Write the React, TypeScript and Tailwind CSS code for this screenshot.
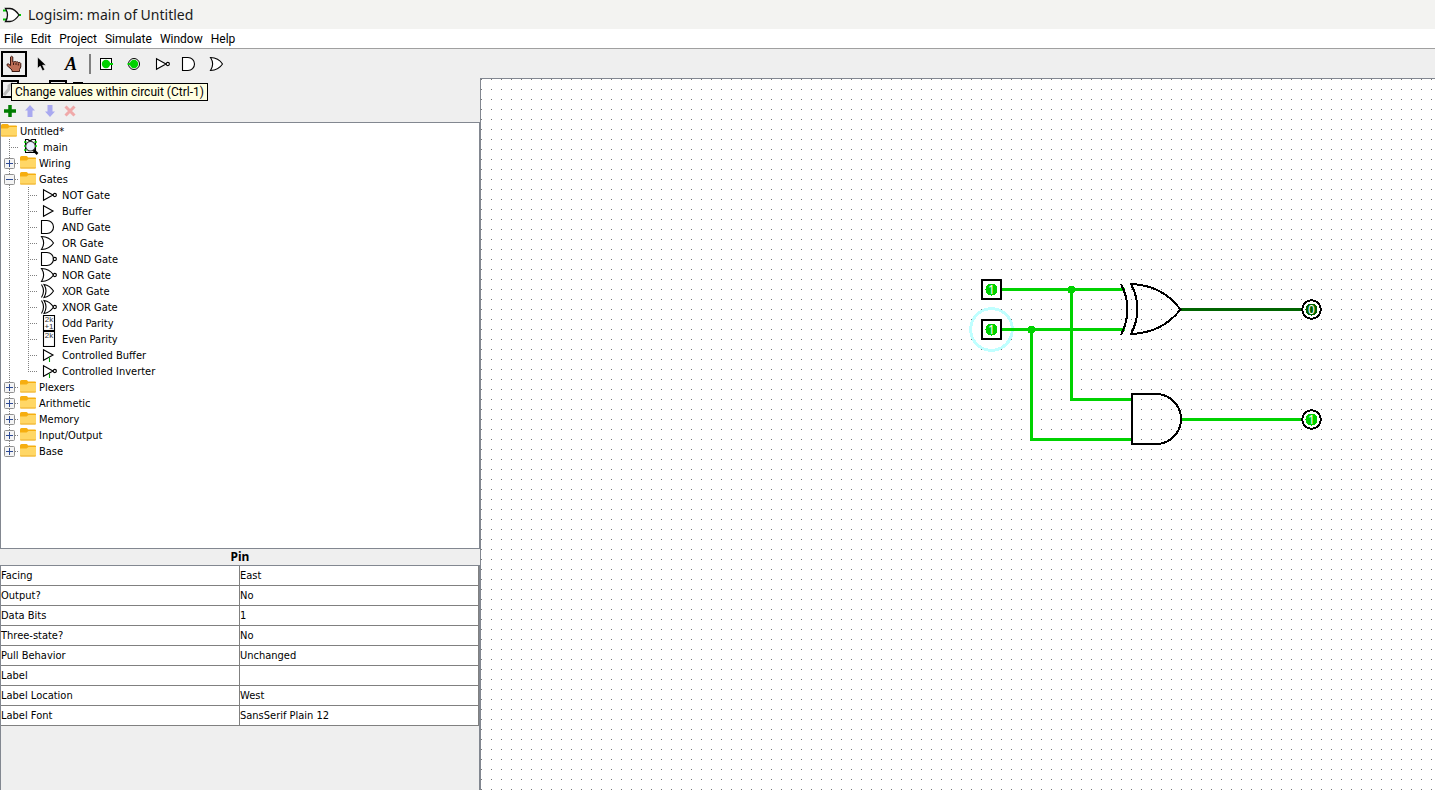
import { useState } from 'react';
import type { ReactNode } from 'react';

type IconName =
  | 'not' | 'buffer' | 'and' | 'or' | 'nand' | 'nor' | 'xor' | 'xnor'
  | 'odd' | 'even' | 'cbuffer' | 'cinverter' | 'circuit' | 'folder';

const OR_BODY = 'M2.5 1.5 Q10.500 1.800 14.5 8 Q10.500 14.200 2.5 14.5 Q6.800 8 2.5 1.5 Z';
const XOR_BODY = 'M5 1.5 Q11 2.500 14.5 8 Q11 13.500 5 14.5 Q9 8 5 1.5 Z';

function Glyph({ name }: { name: IconName }) {
  if (name === 'folder') {
    return (
      <svg width="16" height="16" viewBox="0 0 16 16" className="shrink-0" aria-hidden="true">
        <path d="M0 2.5 Q0 1 1.5 1 H6.5 Q7.5 1 8 2.5 H15 Q16 2.5 16 3.5 V8 H0 Z" fill="#f6ae10" />
        <path d="M0 5.500 H6.500 L8.500 4 H16 V12.5 Q16 13.5 15 13.5 H1 Q0 13.5 0 12.5 Z" fill="#ffd766" />
        <path d="M0 12.5 H16 Q16 13.5 15 13.5 H1 Q0 13.5 0 12.5 Z" fill="#eeb02c" />
      </svg>
    );
  }
  return (
    <svg width="20" height="16" viewBox="0 0 20 16" className="shrink-0" fill="none" stroke="#000" strokeWidth="1.1" aria-hidden="true">
      {(name === 'not' || name === 'cinverter') && (
        <>
          <path d="M4.5 2.8 L14 8 L4.5 13.200 Z" fill="#fff" />
          <circle cx="15.8" cy="8" r="1.6" fill="#fff" />
        </>
      )}
      {(name === 'buffer' || name === 'cbuffer') && <path d="M4.5 2.8 L14 8 L4.5 13.200 Z" fill="#fff" />}
      {(name === 'cbuffer' || name === 'cinverter') && <path d="M10.5 10.500 V15" stroke="#00a000" />}
      {(name === 'and' || name === 'nand') && (
        <path d="M2.5 1.5 H8 A6.5 6.5 0 0 1 8 14.5 H2.5 Z" fill="#fff" />
      )}
      {(name === 'or' || name === 'nor') && <path d={OR_BODY} fill="#fff" />}
      {(name === 'xor' || name === 'xnor') && (
        <>
          <path d={XOR_BODY} fill="#fff" />
          <path d="M2.5 1.5 Q6.500 8 2.5 14.5" />
        </>
      )}
      {(name === 'nand' || name === 'nor' || name === 'xnor') && <circle cx="15.8" cy="8" r="1.6" fill="#fff" />}
      {(name === 'odd' || name === 'even') && (
        <>
          <rect x="4.5" y="0.5" width="11" height="15" fill="#fff" />
          <text x="10" y="7" fontSize="8" textAnchor="middle" fill="#333" stroke="none" fontFamily="Liberation Sans, sans-serif">2k</text>
          {name === 'odd' && (
            <text x="10" y="14" fontSize="8" textAnchor="middle" fill="#333" stroke="none" fontFamily="Liberation Sans, sans-serif">+1</text>
          )}
        </>
      )}
      {name === 'circuit' && (
        <>
          <path d="M5.5 0.5 H8 Q10 2.5 12 0.5 H15.5 V13.5 H5.5 Z" fill="#fff" />
          <circle cx="10.5" cy="7.2" r="4.800" fill="#eceeff" stroke="#333" />
          <path d="M13.5 11 L17.5 15" strokeWidth="2.5" />
          <path d="M4 3 H6.500 M4 7 H6 M4 11 H6.500 M14.500 3 H17 M15 7 H17" stroke="#00d200" strokeWidth="1.500" />
        </>
      )}
    </svg>
  );
}

function Hand() {
  return (
    <svg width="16" height="18" viewBox="0 0 16 18" aria-hidden="true">
      <path
        d="M4.5 2 Q5.5 0.500 6.8 2 V7 H8 Q9.200 5.8 10.200 7 Q11.400 6.2 12.200 7.5 Q14 6.8 14.8 8.5 V12 L13.5 14.500 V16.5 H6 V15 L1 10.5 Q0.5 8.800 2.200 8.800 L4.5 10.5 Z"
        fill="#bd6f57" stroke="#3a1710"
      />
      <path d="M7.500 8 V10 M10 8 V10 M12.300 8.5 V10.5" stroke="#3a1710" />
    </svg>
  );
}

function Arrow() {
  return (
    <svg width="14" height="16" viewBox="0 0 14 16" aria-hidden="true">
      <path d="M2.5 1 V12.5 L5.2 10 L7.5 14.8 L9.8 13.8 L7.6 9.2 H11.2 Z" fill="#000" stroke="#fff" strokeWidth="0.6" />
    </svg>
  );
}

function PinIcon({ round = false }: { round?: boolean }) {
  return (
    <svg width="20" height="16" viewBox="0 0 20 16" aria-hidden="true">
      {round ? (
        <circle cx="10" cy="8" r="5.5" fill="#fff" stroke="#000" />
      ) : (
        <rect x="4.5" y="2.5" width="11" height="11" fill="#fff" stroke="#000" />
      )}
      <circle cx="10" cy="8" r="4.2" fill="#00d200" />
      <path d={round ? 'M3.500 8 H8' : 'M12 8 H17'} stroke="#00d200" strokeWidth="2" />
    </svg>
  );
}

const GATES: [IconName, string][] = [
  ['not', 'NOT Gate'],
  ['buffer', 'Buffer'],
  ['and', 'AND Gate'],
  ['or', 'OR Gate'],
  ['nand', 'NAND Gate'],
  ['nor', 'NOR Gate'],
  ['xor', 'XOR Gate'],
  ['xnor', 'XNOR Gate'],
  ['odd', 'Odd Parity'],
  ['even', 'Even Parity'],
  ['cbuffer', 'Controlled Buffer'],
  ['cinverter', 'Controlled Inverter'],
];

const LIBRARIES = ['Wiring', 'Gates', 'Plexers', 'Arithmetic', 'Memory', 'Input/Output', 'Base'];

/* One 19px indent step with its dotted connector lines. */
function Gutter({ branch = false, last = false }: { branch?: boolean; last?: boolean }) {
  return (
    <svg width="19" height="16" viewBox="0 0 19 16" className="shrink-0" stroke="#808080" strokeDasharray="1 1" aria-hidden="true">
      <path d={last ? 'M8.5 0 V8' : 'M8.5 0 V16'} />
      {branch && <path d="M8 8.5 H18" />}
    </svg>
  );
}

function Expander({ open, last, label, onClick }: { open: boolean; last: boolean; label: string; onClick: () => void }) {
  return (
    <button type="button" aria-label={label} aria-expanded={open} onClick={onClick} className="h-4 w-[19px] shrink-0">
      <svg width="19" height="16" viewBox="0 0 19 16" aria-hidden="true">
        <path d={last ? 'M8.5 0 V8' : 'M8.5 0 V16'} stroke="#808080" strokeDasharray="1 1" />
        <path d="M14 8.5 H18" stroke="#808080" strokeDasharray="1 1" />
        <rect x="3.5" y="3.5" width="10" height="10" rx="1" fill="#f4f4f4" stroke="#919191" />
        <path d={open ? 'M5 8.5 H12' : 'M5 8.5 H12 M8.5 5 V12'} stroke="#2d4a94" />
      </svg>
    </button>
  );
}

function Explorer() {
  const [open, setOpen] = useState<string[]>(['Gates']);
  const toggle = (name: string) =>
    setOpen((cur) => (cur.includes(name) ? cur.filter((n) => n !== name) : [...cur, name]));
  const row = 'flex h-4 items-center';
  const label = 'ml-[3px] pt-[2px] whitespace-nowrap';

  return (
    <div className="min-h-0 flex-[426] overflow-hidden border border-[#828790] bg-white">
      <div className={row}>
        <Glyph name="folder" />
        <span className={label}>Untitled*</span>
      </div>
      <ul>
        <li className={row}>
          <Gutter branch />
          <Glyph name="circuit" />
          <span className={label}>main</span>
        </li>
        {LIBRARIES.map((name, i) => {
          const isOpen = open.includes(name);
          const last = i === LIBRARIES.length - 1;
          return (
            <li key={name}>
              <div className={row}>
                <Expander open={isOpen} last={last} label={name} onClick={() => toggle(name)} />
                <Glyph name="folder" />
                <span className={label}>{name}</span>
              </div>
              {isOpen && name === 'Gates' && (
                <ul>
                  {GATES.map(([icon, text], g) => (
                    <li key={text} className={row}>
                      <Gutter />
                      <Gutter branch last={g === GATES.length - 1} />
                      <Glyph name={icon} />
                      <span className={label}>{text}</span>
                    </li>
                  ))}
                </ul>
              )}
            </li>
          );
        })}
      </ul>
    </div>
  );
}

const ATTRIBUTES: [string, string][] = [
  ['Facing', 'East'],
  ['Output?', 'No'],
  ['Data Bits', '1'],
  ['Three-state?', 'No'],
  ['Pull Behavior', 'Unchanged'],
  ['Label', ''],
  ['Label Location', 'West'],
  ['Label Font', 'SansSerif Plain 12'],
];

function Attributes() {
  return (
    <section className="flex min-h-0 flex-[242] flex-col">
      <h2 className="h-4 text-center font-['Noto_Sans'] text-xs leading-4 font-bold">Pin</h2>
      <div className="flex-1 border border-b-0 border-[#828790]">
        <table className="w-full table-fixed border-separate border-spacing-0 bg-white">
          <tbody>
            {ATTRIBUTES.map(([name, value]) => (
              <tr key={name} className="h-5">
                <th scope="row" className="border-r border-b border-[#808080] p-0 pt-px text-left font-normal">{name}</th>
                <td className="border-r border-b border-[#808080] p-0 pt-px">{value}</td>
              </tr>
            ))}
          </tbody>
        </table>
      </div>
    </section>
  );
}

function ToolButton({ label, selected = false, children }: { label: string; selected?: boolean; children: ReactNode }) {
  return (
    <button
      type="button"
      aria-label={label}
      className={`flex size-[26px] items-center justify-center ${selected ? 'border-2 border-black' : ''}`}
    >
      {children}
    </button>
  );
}

function Toolbar() {
  return (
    <div className="relative flex h-[29px] items-center gap-[2px] pl-px">
      <ToolButton label="Poke tool" selected><Hand /></ToolButton>
      <ToolButton label="Edit tool"><Arrow /></ToolButton>
      <ToolButton label="Text tool">
        <span className="pl-[2px] font-['Liberation_Serif'] text-lg leading-none font-bold italic">A</span>
      </ToolButton>
      <div className="ml-1 h-5 w-[2px] bg-[#808080]" />
      <ToolButton label="Input pin"><PinIcon /></ToolButton>
      <ToolButton label="Output pin"><PinIcon round /></ToolButton>
      <ToolButton label="NOT gate"><Glyph name="not" /></ToolButton>
      <ToolButton label="AND gate"><Glyph name="and" /></ToolButton>
      <ToolButton label="OR gate"><Glyph name="or" /></ToolButton>
      <div
        role="tooltip"
        className="absolute top-[34px] left-[11px] z-10 border border-black bg-[#ffffe1] px-[3px] font-['Roboto'] text-xs leading-4 whitespace-nowrap"
      >
        Change values within circuit (Ctrl-1)
      </div>
    </div>
  );
}

function ExplorerToolbars() {
  return (
    <>
      <div className="flex h-[22px] items-center gap-[6px] pl-px">
        <button type="button" aria-label="Show toolbox" className="flex size-[18px] items-center justify-center border-2 border-black">
          <svg width="14" height="14" viewBox="0 0 14 14" aria-hidden="true">
            <path d="M1 13 L6 7 V4 L10 1" stroke="#bdbdbd" strokeWidth="3" fill="none" />
          </svg>
        </button>
        <button type="button" aria-label="Show simulation tree" className="flex size-[18px] items-center justify-center">
          <svg width="14" height="14" viewBox="0 0 14 14" aria-hidden="true"><path d="M6 1 V12" stroke="#000" /></svg>
        </button>
        <button type="button" aria-label="Edit circuit layout" className="size-[18px] border-2 border-black" />
        <button type="button" aria-label="Edit circuit appearance" className="flex size-[18px]">
          <svg width="14" height="14" viewBox="0 0 14 14" aria-hidden="true"><rect y="2" width="10" height="10" /></svg>
        </button>
      </div>
      <div className="flex h-[22px] items-center">
        <button type="button" aria-label="Add circuit" className="flex size-5 items-center justify-center">
          <svg width="12" height="12" viewBox="0 0 12 12" aria-hidden="true">
            <path d="M6 0 V12 M0 6 H12" stroke="#007c00" strokeWidth="3.5" />
          </svg>
        </button>
        <button type="button" aria-label="Move circuit up" className="flex size-5 items-center justify-center">
          <svg width="10" height="12" viewBox="0 0 10 12" aria-hidden="true">
            <path d="M5 0 L10 5.5 H7.5 V12 H2.5 V5.5 H0 Z" fill="#a9a9f0" />
          </svg>
        </button>
        <button type="button" aria-label="Move circuit down" className="flex size-5 items-center justify-center">
          <svg width="10" height="12" viewBox="0 0 10 12" aria-hidden="true">
            <path d="M5 12 L10 6.5 H7.5 V0 H2.5 V6.5 H0 Z" fill="#a9a9f0" />
          </svg>
        </button>
        <button type="button" aria-label="Delete circuit" className="flex size-5 items-center justify-center">
          <svg width="12" height="12" viewBox="0 0 12 12" aria-hidden="true">
            <path d="M1.5 1.5 L10.5 10.5 M10.5 1.5 L1.5 10.5" stroke="#f0a9a9" strokeWidth="3" />
          </svg>
        </button>
      </div>
    </>
  );
}

const ON = '#00d200';
const OFF = '#006400';

function PinValue({ x, y, value }: { x: number; y: number; value: 0 | 1 }) {
  return (
    <>
      <circle cx={x} cy={y} r="6" fill={value ? ON : OFF} />
      <text x={x} y={y + 4} fontSize="12" textAnchor="middle" fill="#fff" fontFamily="Noto Sans, sans-serif">{value}</text>
    </>
  );
}

function Canvas() {
  return (
    <main className="flex min-w-0 flex-1 overflow-hidden border-t border-l border-[#828790] bg-white">
      <svg className="w-full flex-1" fill="none" shapeRendering="crispEdges" role="img" aria-label="Half adder circuit">
        <defs>
          <pattern id="grid" width="10" height="10" patternUnits="userSpaceOnUse">
            <rect width="1" height="1" fill="#777777" />
          </pattern>
        </defs>
        <rect width="100%" height="100%" fill="url(#grid)" />

        <circle cx="510.5" cy="250.5" r="20.8" stroke="#c0ffff" strokeWidth="3" />
        <g stroke={ON} strokeWidth="3">
          <path d="M520 210.5 H644" />
          <path d="M520 250.5 H644" />
          <path d="M590.5 210 V320.5 H651" />
          <path d="M550.5 250 V360.5 H651" />
          <path d="M699 340.5 H822" />
        </g>
        <path d="M699 230.5 H822" stroke={OFF} strokeWidth="3" />
        <circle cx="590.5" cy="210.5" r="4" fill={ON} />
        <circle cx="550.5" cy="250.5" r="4" fill={ON} />

        <g stroke="#000" strokeWidth="2">
          <rect x="501" y="201" width="19" height="19" fill="#fff" />
          <rect x="501" y="241" width="19" height="19" />
          <circle cx="830.5" cy="230.5" r="9.3" fill="#fff" />
          <circle cx="830.5" cy="340.5" r="9.3" fill="#fff" />
          <path d="M650 205 Q681 206 699.5 230.5 Q681 254 650 255 Q663 230 650 205 Z" />
          <path d="M640 205 Q653 230 640 256" />
          <path d="M675 315 H651 V365 H675 A25 25 0 0 0 675 315 Z" />
        </g>

        <PinValue x={510.5} y={210.5} value={1} />
        <PinValue x={510.5} y={250.5} value={1} />
        <PinValue x={830.5} y={230.5} value={0} />
        <PinValue x={830.5} y={340.5} value={1} />
      </svg>
    </main>
  );
}

const MENUS = ['File', 'Edit', 'Project', 'Simulate', 'Window', 'Help'];

export default function App() {
  return (
    <div className="flex min-h-screen flex-col bg-[#efefef] font-['DejaVu_Sans_Condensed','DejaVu_Sans',sans-serif] text-[11px] leading-4 text-black">
      <header className="flex h-[29px] items-center bg-[#f3f3f1] pl-[2px]">
        <svg width="20" height="16" viewBox="0 0 20 16" fill="none" aria-hidden="true">
          <path d="M1 3.5 H5 M1 12.5 H5 M16 8 H19" stroke="#00c800" strokeWidth="2" />
          <path d="M3.5 1.5 H8 Q13 2 17 8 Q13 14 8 14.5 H3.5 Q7.5 8 3.5 1.5 Z" fill="#fff" stroke="#111" strokeWidth="1.3" />
        </svg>
        <h1 className="ml-[6px] font-['Noto_Sans'] text-sm text-[#1a1a1a]">Logisim: main of Untitled</h1>
      </header>
      <nav className="flex h-5 items-center border-b border-[#a0a0a0] bg-white font-['Roboto'] text-xs">
        {MENUS.map((menu) => (
          <button key={menu} type="button" className="px-1">{menu}</button>
        ))}
      </nav>
      <Toolbar />
      <div className="flex flex-1">
        <aside className="flex w-[480px] shrink-0 flex-col">
          <ExplorerToolbars />
          <Explorer />
          <Attributes />
        </aside>
        <Canvas />
      </div>
    </div>
  );
}
